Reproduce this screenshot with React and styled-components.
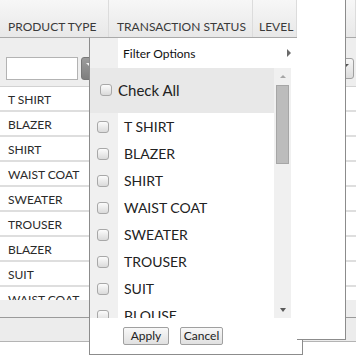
import React from 'react';
import styled, { createGlobalStyle } from 'styled-components';

const GlobalStyle = createGlobalStyle`
  html, body {
    margin: 0;
    padding: 0;
    background: #fff;
  }
  body {
    font-family: Lato, 'Liberation Sans', sans-serif;
    color: #222;
  }
`;

const Page = styled.div`
  position: relative;
  width: 356px;
  height: 356px;
  overflow: hidden;
`;

// grid behind the popups
const Grid = styled.div`
  width: 356px;
  display: flex;
  flex-direction: column;
`;

const HeaderRow = styled.div`
  display: flex;
  height: 37px;
  border-bottom: 1px solid #a9a9a9;
  background: linear-gradient(#f7f7f7, #e8e8e8);
`;

const HeaderCell = styled.div`
  flex: ${({ w }) => (w ? `0 0 ${w}px` : '1')};
  box-sizing: border-box;
  border-right: 1px solid #dcdcdc;
  padding: 19px 0 0 ${({ pad }) => pad || 8}px;
  font-size: 12px;
  line-height: 16px;
  color: #3a3a3a;
  white-space: nowrap;
  overflow: hidden;
`;

const FilterRow = styled.div`
  display: flex;
  height: 48px;
  background: #eeeeee;
  border-bottom: 1px solid #d2d2d2;
`;

const FilterCell = styled.div`
  flex: ${({ w }) => (w ? `0 0 ${w}px` : '1')};
  box-sizing: border-box;
  display: flex;
  align-items: flex-start;
  justify-content: ${({ end }) => (end ? 'flex-end' : 'flex-start')};
  padding: ${({ end }) => (end ? '20px 2px 0 0' : '19px 0 0 6px')};
  gap: 3px;
`;

const FilterInput = styled.div`
  width: 72px;
  height: 23px;
  box-sizing: border-box;
  border: 1px solid #b3b3b3;
  background: #fff;
`;

const DropButton = styled.div`
  position: relative;
  width: 16px;
  height: ${({ dark }) => (dark ? 23 : 21)}px;
  box-sizing: border-box;
  border-radius: 3px;
  border: 1px solid ${({ dark }) => (dark ? '#777' : '#a0a0a0')};
  background: ${({ dark }) =>
    dark ? 'linear-gradient(#9c9c9c, #7e7e7e)' : 'linear-gradient(#f6f6f6, #dcdcdc)'};

  &::after {
    content: '';
    position: absolute;
    left: 4px;
    top: 5px;
    border-left: 3px solid transparent;
    border-right: 3px solid transparent;
    border-top: 3px solid ${({ dark }) => (dark ? '#f0f0f0' : '#555')};
  }
`;

const Rows = styled.div`
  height: 213px;
  overflow: hidden;
`;

const Row = styled.div`
  display: flex;
  height: 25px;
  box-sizing: border-box;
  border-bottom: 2px solid #dedede;
  background: #fff;
`;

const Cell = styled.div`
  flex: ${({ w }) => (w ? `0 0 ${w}px` : '1')};
  box-sizing: border-box;
  padding: 5px 0 0 8px;
  font-size: 12px;
  line-height: 16px;
  color: #2a2a2a;
  white-space: nowrap;
`;

const ScrollBand = styled.div`
  height: 17px;
  background: #eeeeee;
`;

const Pager = styled.div`
  height: 23px;
  background: #ececec;
  border-top: 1px solid #9a9a9a;
  border-bottom: 1px solid #b4b4b4;
`;

// back panel, sits over the grid's right side
const BackPanel = styled.div`
  position: absolute;
  left: 297px;
  top: -1px;
  width: 49px;
  height: 341px;
  box-sizing: border-box;
  background: #fff;
  border-right: 1px solid #8c8c8c;
  border-bottom: 1px solid #8c8c8c;
  z-index: 3;
`;

// filter popup
const Popup = styled.div`
  position: absolute;
  left: 89px;
  top: 37px;
  width: 214px;
  height: 318px;
  box-sizing: border-box;
  background: #fff;
  border: 1px solid #8c8c8c;
  border-top-color: #a9a9a9;
  display: flex;
  flex-direction: column;
  z-index: 2;
`;

const OptionsRow = styled.div`
  display: flex;
  align-items: center;
  height: 30px;
  flex: none;
`;

const Gutter = styled.div`
  align-self: stretch;
  flex: 0 0 28px;
  background: #f0f0f0;
  display: flex;
  align-items: center;
  padding-left: 7px;
  box-sizing: border-box;
`;

const OptionsLabel = styled.span`
  margin-left: 5px;
  font-size: 12px;
  color: #111;
`;

const SubArrow = styled.span`
  margin: 0 11px 0 auto;
  border-top: 4px solid transparent;
  border-bottom: 4px solid transparent;
  border-left: 4px solid #6a6a6a;
`;

const ListArea = styled.div`
  display: flex;
  height: 250px;
  flex: none;
`;

const List = styled.div`
  flex: 0 0 184px;
  overflow: hidden;
`;

const CheckAllRow = styled.div`
  display: flex;
  align-items: center;
  height: 43px;
  padding: 0 0 2px 10px;
  background: #e8e8e8;
  font-size: 15px;
  color: #222;
  gap: 6px;
`;

const ItemRow = styled.div`
  display: flex;
  align-items: center;
  height: 27px;
`;

const ItemLabel = styled.span`
  margin-left: 6px;
  font-size: 14px;
  color: #222;
  white-space: nowrap;
`;

const Checkbox = styled.span`
  display: inline-block;
  width: 12px;
  height: 12px;
  box-sizing: border-box;
  border: 1px solid #a8a8a8;
  border-radius: 3px;
  background: linear-gradient(#fcfcfc, #dadada);
`;

const ScrollBar = styled.div`
  flex: 0 0 17px;
  background: #f0f0f0;
  display: flex;
  flex-direction: column;
`;

const ScrollArrow = styled.div`
  height: 17px;
  flex: none;
  display: flex;
  align-items: center;
  justify-content: center;

  &::after {
    content: '';
    border-left: 3px solid transparent;
    border-right: 3px solid transparent;
    ${({ down }) =>
      down ? 'border-top: 4px solid #5a5a5a;' : 'border-bottom: 3px solid #a6a6a6;'}
  }
`;

const Thumb = styled.div`
  height: 79px;
  margin: 0 2px;
  box-sizing: border-box;
  background: #bcbcbc;
  border: 1px solid #a6a6a6;
`;

const Spacer = styled.div`
  flex: 1;
`;

const Footer = styled.div`
  display: flex;
  gap: 11px;
  padding: 9px 0 0 33px;
  flex: 1;
`;

const Button = styled.div`
  height: 18px;
  width: ${({ w }) => w}px;
  box-sizing: border-box;
  border: 1px solid #a0a0a0;
  border-radius: 2px;
  background: linear-gradient(#f8f8f8, #e0e0e0);
  font-size: 12px;
  line-height: 16px;
  text-align: center;
  color: #222;
`;

const gridRows = ['T SHIRT', 'BLAZER', 'SHIRT', 'WAIST COAT', 'SWEATER', 'TROUSER', 'BLAZER', 'SUIT', 'WAIST COAT'];
const options = ['T SHIRT', 'BLAZER', 'SHIRT', 'WAIST COAT', 'SWEATER', 'TROUSER', 'SUIT', 'BLOUSE'];

const App = () => (
  <Page>
    <GlobalStyle />
    <Grid>
      <HeaderRow>
        <HeaderCell w={109} pad={8}>PRODUCT TYPE</HeaderCell>
        <HeaderCell w={144} pad={8}>TRANSACTION STATUS</HeaderCell>
        <HeaderCell w={44} pad={6}>LEVEL</HeaderCell>
        <HeaderCell />
      </HeaderRow>
      <FilterRow>
        <FilterCell w={109}>
          <FilterInput />
          <DropButton dark />
        </FilterCell>
        <FilterCell w={144} />
        <FilterCell w={44} />
        <FilterCell end>
          <DropButton />
        </FilterCell>
      </FilterRow>
      <Rows>
        {gridRows.map((name, i) => (
          <Row key={i}>
            <Cell w={109}>{name}</Cell>
            <Cell w={144} />
            <Cell w={44} />
            <Cell />
          </Row>
        ))}
      </Rows>
      <ScrollBand />
      <Pager />
    </Grid>

    <Popup>
      <OptionsRow>
        <Gutter />
        <OptionsLabel>Filter Options</OptionsLabel>
        <SubArrow />
      </OptionsRow>
      <ListArea>
        <List>
          <CheckAllRow>
            <Checkbox />
            Check All
          </CheckAllRow>
          {options.map((name) => (
            <ItemRow key={name}>
              <Gutter>
                <Checkbox />
              </Gutter>
              <ItemLabel>{name}</ItemLabel>
            </ItemRow>
          ))}
        </List>
        <ScrollBar>
          <ScrollArrow />
          <Thumb />
          <Spacer />
          <ScrollArrow down />
        </ScrollBar>
      </ListArea>
      <Footer>
        <Button w={46}>Apply</Button>
        <Button w={43}>Cancel</Button>
      </Footer>
    </Popup>

    <BackPanel />
  </Page>
);

export default App;
